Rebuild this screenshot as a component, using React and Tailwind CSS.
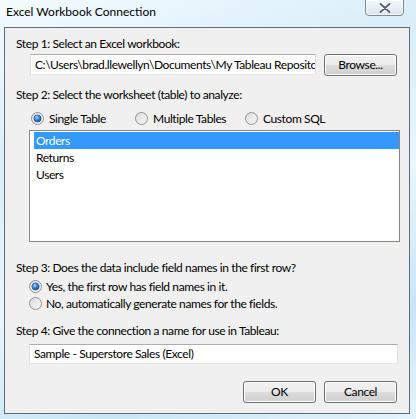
import React from "react";

const font = { fontFamily: 'Lato, "Noto Sans", sans-serif' };

function Radio({ checked }) {
  return (
    <svg width="13" height="13" viewBox="0 0 13 13" className="shrink-0">
      <defs>
        <linearGradient id="rbg" x1="0" y1="0" x2="1" y2="1">
          <stop offset="0" stopColor="#d6d6d6" />
          <stop offset="1" stopColor="#ffffff" />
        </linearGradient>
        <radialGradient id="rdot" cx="0.4" cy="0.35" r="0.7">
          <stop offset="0" stopColor="#9fd3fa" />
          <stop offset="0.45" stopColor="#3f8fd6" />
          <stop offset="1" stopColor="#0d3a78" />
        </radialGradient>
      </defs>
      <circle cx="6.5" cy="6.5" r="6" fill="url(#rbg)" stroke="#8f8f8f" strokeWidth="1" />
      <circle cx="6.5" cy="6.5" r="4.6" fill="none" stroke="#e8e8e8" strokeWidth="0.8" />
      {checked && <circle cx="6.5" cy="6.5" r="3.6" fill="url(#rdot)" stroke="#1a4f8f" strokeWidth="0.6" />}
    </svg>
  );
}

function WinButton({ children, className = "" }) {
  return (
    <div
      className={
        "h-[22px] w-[73px] shrink-0 rounded-[3px] border border-[#707070] flex items-center justify-center text-[12px] text-black shadow-[inset_0_0_0_1px_#fcfcfc] bg-[linear-gradient(to_bottom,#f2f2f2_0%,#ebebeb_50%,#dddddd_50%,#cfcfcf_100%)] " +
        className
      }
    >
      {children}
    </div>
  );
}

export default function App() {
  return (
    <div
      style={font}
      className="relative w-[416px] h-[419px] overflow-hidden bg-[linear-gradient(160deg,#f4fbff_0%,#d9eef9_30%,#e9f6fc_55%,#c9e6f5_80%,#e4f4fb_100%)]"
    >
      {/* title bar */}
      <div className="h-[27px] pl-[6px] flex items-center text-[12px] text-black leading-none pb-[3px]">
        Excel Workbook Connection
      </div>
      <div className="absolute top-[-1px] left-[365px] w-[39px] h-[17px] rounded-b-[4px] border border-[#7d8a96] bg-[linear-gradient(to_bottom,#f3f8fb,#d9e6ee)] flex items-center justify-center shadow-[inset_0_0_0_1px_rgba(255,255,255,0.7)]">
        <svg width="12" height="10" viewBox="0 0 12 10">
          <path d="M1.5 1 L10.5 9 M10.5 1 L1.5 9" stroke="#ffffff" strokeWidth="4" strokeLinecap="round" />
          <path d="M1.5 1 L10.5 9 M10.5 1 L1.5 9" stroke="#5c6470" strokeWidth="2" strokeLinecap="round" />
        </svg>
      </div>

      {/* client area */}
      <div className="ml-[4px] w-[406px] h-[387px] border border-[#5f6b76] bg-[#f0f0f0] pl-[11px] text-[12px] tracking-[-0.4px] text-black">
        <div className="mt-[8px] h-[15px] leading-[15px]">Step 1: Select an Excel workbook:</div>

        <div className="mt-[3px] flex items-start">
          <div className="ml-[14px] w-[286px] h-[21px] border border-[#abadb3] border-x-[#dbdfe6] border-b-[#e3e9ef] bg-white flex items-center pl-[4px] overflow-hidden whitespace-nowrap">
            C:\Users\brad.llewellyn\Documents\My Tableau Repository
          </div>
          <WinButton className="ml-[8px]">Browse...</WinButton>
        </div>

        <div className="mt-[11px] h-[15px] leading-[15px]">Step 2: Select the worksheet (table) to analyze:</div>

        <div className="mt-[9px] flex items-center h-[15px]">
          <div className="ml-[15px] flex items-center gap-[5px] w-[104px] shrink-0">
            <Radio checked />
            <span>Single Table</span>
          </div>
          <div className="flex items-center gap-[5px] w-[110px] shrink-0">
            <Radio />
            <span>Multiple Tables</span>
          </div>
          <div className="flex items-center gap-[5px]">
            <Radio />
            <span>Custom SQL</span>
          </div>
        </div>

        <div className="mt-[4px] ml-[13px] w-[371px] h-[112px] border border-[#828790] bg-white pl-[4px] pt-[1px]">
          <div className="h-[17px] leading-[17px] bg-[#3399ff] text-white pl-[2px]">Orders</div>
          <div className="h-[17px] leading-[17px] pl-[2px]">Returns</div>
          <div className="h-[17px] leading-[17px] pl-[2px]">Users</div>
        </div>

        <div className="mt-[18px] h-[15px] leading-[15px]">Step 3: Does the data include field names in the first row?</div>
        <div className="mt-[3px] ml-[13px] flex items-center gap-[4px] h-[17px]">
          <Radio checked />
          <span>Yes, the first row has field names in it.</span>
        </div>
        <div className="ml-[13px] flex items-center gap-[4px] h-[17px]">
          <Radio />
          <span>No, automatically generate names for the fields.</span>
        </div>

        <div className="mt-[11px] h-[15px] leading-[15px]">Step 4: Give the connection a name for use in Tableau:</div>
        <div className="mt-[6px] ml-[13px] w-[369px] h-[20px] border border-[#abadb3] border-x-[#dbdfe6] border-b-[#e3e9ef] bg-white flex items-center pl-[4px]">
          Sample - Superstore Sales (Excel)
        </div>

        <div className="mt-[17px] flex gap-[8px] pl-[227px]">
          <WinButton>OK</WinButton>
          <WinButton>Cancel</WinButton>
        </div>
      </div>
    </div>
  );
}
